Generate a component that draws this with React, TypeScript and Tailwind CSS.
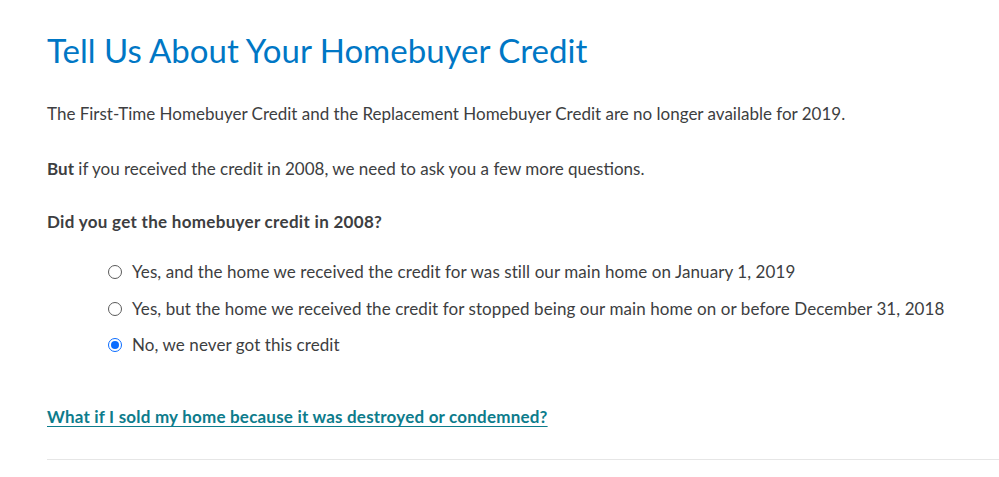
import React, { useState } from "react";

const options = [
  "Yes, and the home we received the credit for was still our main home on January 1, 2019",
  "Yes, but the home we received the credit for stopped being our main home on or before December 31, 2018",
  "No, we never got this credit",
];

const App: React.FC = () => {
  const [picked, setPicked] = useState(2);

  return (
    <div
      className="bg-white min-h-[477px] pl-[47px] text-[#3d3e41]"
      style={{ fontFamily: "Lato, 'Open Sans', sans-serif" }}
    >
      <h1 className="pt-[28px] text-[33px] leading-[44px] text-[#0077c5] font-normal">
        Tell Us About Your Homebuyer Credit
      </h1>

      <p className="mt-[30px] text-[17px] leading-[24px]">
        The First-Time Homebuyer Credit and the Replacement Homebuyer Credit are no longer available for 2019.
      </p>

      <p className="mt-[31px] text-[17px] leading-[24px]">
        <span className="font-bold">But</span> if you received the credit in 2008, we need to ask you a few more questions.
      </p>

      <p className="mt-[29px] text-[17px] leading-[24px] font-bold tracking-[0.3px]">
        Did you get the homebuyer credit in 2008?
      </p>

      <div className="mt-[26px] pl-[61px] flex flex-col gap-[12.5px]">
        {options.map((label, i) => (
          <label
            key={i}
            className="flex items-center gap-[10px] cursor-pointer text-[17px] leading-[24px] tracking-[0.08px]"
            onClick={() => setPicked(i)}
          >
            {picked === i ? (
              <span className="w-[14px] h-[14px] rounded-full border-[1.5px] border-[#0a6cff] flex items-center justify-center">
                <span className="w-[8px] h-[8px] rounded-full bg-[#0a6cff]" />
              </span>
            ) : (
              <span className="w-[14px] h-[14px] rounded-full border-[1.5px] border-[#5a5a5a]" />
            )}
            <span>{label}</span>
          </label>
        ))}
      </div>

      <a
        href="#"
        className="inline-block mt-[48px] text-[17px] leading-[24px] font-bold tracking-[0.2px] text-[#0d7c8c] underline underline-offset-[3px]"
      >
        What if I sold my home because it was destroyed or condemned?
      </a>

      <div className="mt-[30px] border-t border-[#e6e6e6]" />
    </div>
  );
};

export default App;
